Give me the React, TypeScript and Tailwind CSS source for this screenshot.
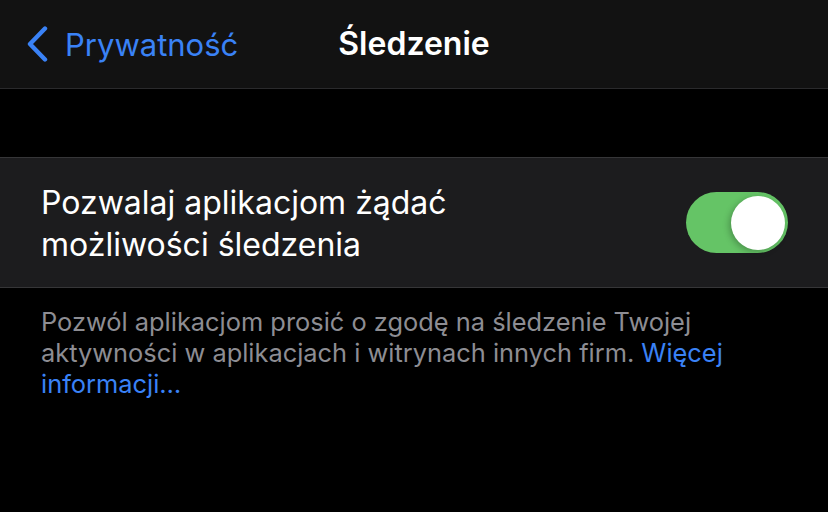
function Toggle({ on }: { on: boolean }) {
  return (
    <div
      className={`w-[102px] h-[61px] rounded-full flex items-center px-[3px] ${
        on ? "bg-[#65c466] justify-end" : "bg-[#39393d] justify-start"
      }`}
    >
      <div className="w-[54px] h-[54px] rounded-full bg-white shadow-[-2px_2px_6px_rgba(0,0,0,0.25)]" />
    </div>
  )
}

export default function App() {
  return (
    <div className="w-[828px] h-[512px] bg-black overflow-hidden font-['Inter',sans-serif] antialiased">
      {/* nav bar */}
      <div className="h-[89px] bg-[#121212] border-b border-[#2a2a2c] flex items-center relative">
        <div className="flex items-center pl-[26px] text-[#3a82f6]">
          <svg width="22" height="36" viewBox="0 0 22 36" fill="none">
            <path d="M19 2.5 L4 18 L19 33.5" stroke="currentColor" strokeWidth="4.4" strokeLinecap="round" strokeLinejoin="round" />
          </svg>
          <span className="ml-[17px] text-[31px] leading-none">Prywatność</span>
        </div>
        <div className="absolute left-0 right-0 text-center text-white text-[32px] font-semibold leading-none pointer-events-none">
          Śledzenie
        </div>
      </div>

      {/* spacer */}
      <div className="h-[68px]" />

      {/* cell */}
      <div className="h-[131px] bg-[#1c1c1e] border-y border-[#363638] flex items-center justify-between pl-[41px] pr-[40px]">
        <div className="text-white text-[32px] leading-[42px] pt-[3px]">
          Pozwalaj aplikacjom żądać
          <br />
          możliwości śledzenia
        </div>
        <Toggle on />
      </div>

      {/* footer */}
      <div className="px-[41px] pt-[18px] text-[25.4px] leading-[31px] text-[#8d8d93]">
        Pozwól aplikacjom prosić o zgodę na śledzenie Twojej
        <br />
        aktywności w aplikacjach i witrynach innych firm.{" "}
        <span className="text-[#3a82f6]">Więcej</span>
        <br />
        <span className="text-[#3a82f6]">informacji…</span>
      </div>
    </div>
  )
}
